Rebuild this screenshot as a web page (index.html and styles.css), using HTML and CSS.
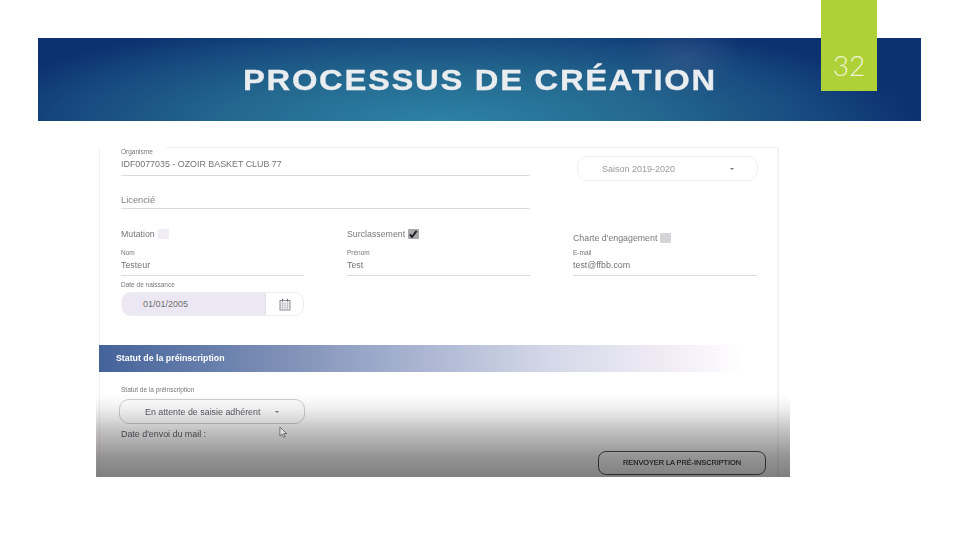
FILE: index.html
```html
<!DOCTYPE html>
<html lang="fr">
<head>
<meta charset="utf-8">
<title>Processus de création</title>
<link rel="stylesheet" href="styles.css">
</head>
<body>
<main class="slide">
  <header class="banner">
    <h1 class="title">PROCESSUS DE CRÉATION</h1>
  </header>
  <div class="badge">32</div>
  <section class="shot">
    <div class="frame">
      <div class="top-rule"></div>
      <div class="form">
        <div class="grid row-org">
          <div class="field span2">
            <div class="label">Organisme</div>
            <div class="value">IDF0077035 - OZOIR BASKET CLUB 77</div>
          </div>
          <div class="select season"><span>Saison 2019-2020</span><i class="caret"></i></div>
        </div>
        <div class="grid row-lic">
          <div class="field span2 lic"><div class="big">Licencié</div></div>
        </div>
        <div class="grid row-check">
          <div class="check">Mutation <i class="box"></i></div>
          <div class="check">Surclassement
            <i class="box on"><svg viewBox="0 0 10 10" width="10" height="10"><path d="M1.800 5.400 4 8 8.600 1.800" fill="none" stroke="#222" stroke-width="2"/></svg></i>
          </div>
          <div class="check charte">Charte d'engagement <i class="box grey"></i></div>
        </div>
        <div class="grid row-names">
          <div class="field"><div class="label">Nom</div><div class="value">Testeur</div></div>
          <div class="field"><div class="label">Prénom</div><div class="value">Test</div></div>
          <div class="field"><div class="label">E-mail</div><div class="value">test@ffbb.com</div></div>
        </div>
        <div class="label date-label">Date de naissance</div>
        <div class="date">
          <div class="date-value">01/01/2005</div>
          <div class="date-icon">
            <svg viewBox="0 0 12 13" width="12" height="13"><rect x="1" y="2.500" width="10" height="9.500" fill="none" stroke="#8d8d93" stroke-width="1"/><path d="M1 5h10M1 7.300h10M1 9.600h10M3.500 5v7M6 5v7M8.500 5v7" stroke="#a9a9af" stroke-width=".6"/><path d="M3.500 .8v3M8.500 .8v3" stroke="#77777d" stroke-width="1.200"/></svg>
          </div>
        </div>
      </div>
      <div class="band">Statut de la préinscription</div>
      <div class="lower">
        <div class="label status-label">Statut de la préinscription</div>
        <div class="select status"><span>En attente de saisie adhérent</span><i class="caret"></i></div>
        <div class="mail">Date d'envoi du mail :</div>
        <div class="actions"><div class="btn">RENVOYER LA PRÉ-INSCRIPTION</div></div>
      </div>
    </div>
    <div class="fade"></div>
    <svg class="cursor" viewBox="0 0 10 14" width="9" height="13"><path d="M1 1v10l2.500-2.200 1.700 3.700 1.700-.8-1.700-3.600H8.500z" fill="#e4e4e4" stroke="#555" stroke-width=".9"/></svg>
  </section>
</main>
</body>
</html>
```
FILE: styles.css
```css
* { box-sizing: border-box; }
html, body { margin: 0; padding: 0; background: #fff; }
body { width: 960px; height: 540px; overflow: hidden; font-family: "Liberation Sans", Arial, sans-serif; }
.slide { position: relative; width: 960px; height: 540px; padding-top: 38px; }
.banner {
  margin-left: 38px; width: 883px; height: 83px;
  padding: 25px 0 0 205px;
  background:
    radial-gradient(ellipse 55px 40px at 648px 20px, rgba(70,95,145,.4), rgba(70,95,145,0) 100%),
    radial-gradient(ellipse 470px 105px at 403px 83px, #2d82a6 0%, #24688f 45%, #174b7f 78%, #0d3270 100%);
}
.title {
  margin: 0; width: 418px; color: #e9edf0; font-size: 29px; line-height: 34px; font-weight: 700;
  letter-spacing: 1.500px; white-space: nowrap;
  transform: scaleX(1.13); transform-origin: 0 50%;
  -webkit-text-stroke: .3px #e9edf0; filter: blur(.3px);
}
.badge {
  position: absolute; left: 821px; top: 0; width: 56px; height: 91px;
  padding-top: 48px; text-align: center;
  background: #add136; color: #eef4d4; font-family: Lato, "Liberation Sans", sans-serif; font-weight: 300; font-size: 28px; line-height: 34px;
}
.shot { position: relative; margin: 18px 0 0 96px; width: 694px; height: 338px; overflow: hidden; background: #fff; }
.frame {
  height: 338px; margin-left: 3px; width: 680px;
  border-left: 1px solid #f5eef2; border-right: 2px solid #f6f3f5;
  filter: blur(.45px);
}
.top-rule { height: 1px; margin: 8px 0 0 66px; background: #f1f1f3; }
.form { padding: 0 0 0 21px; height: 197px; }
.grid { display: grid; grid-template-columns: 183px 183px 184px; column-gap: 43px; }
.span2 { grid-column: span 2; }
.label { font-size: 6.500px; line-height: 8px; color: #77777c; }
.value { font-size: 8.900px; line-height: 12px; color: #737378; margin-top: 2px; }
.field { border-bottom: 1px solid #dcdcdf; }
.row-org { height: 29px; }
.row-org .field { height: 28px; padding-top: 0; }
.select {
  display: flex; align-items: center; border: 1px solid #f0f0f2; border-radius: 10px; background: #fff;
  font-size: 9px; color: #9a9a9e;
}
.season { height: 25px; margin: 8px 0 0 4px; padding-left: 24px; justify-content: flex-start; width: 181px; }
.season span { width: 128px; }
.caret { display: block; width: 0; height: 0; border: 2px solid transparent; border-top: 2.500px solid #777; border-bottom: 0; }
.row-lic { height: 33px; }
.lic { height: 32px; padding-top: 17px; }
.big { font-size: 9.300px; line-height: 12px; color: #808085; }
.row-check { height: 39px; padding-top: 18px; }
.check { display: flex; align-items: center; gap: 3px; height: 12px; font-size: 8.800px; color: #77777c; white-space: nowrap; }
.charte { margin-top: 4px; }
.box { display: block; width: 11px; height: 10px; border-radius: 1px; background: #f1edf4; }
.box.on { background: #a9a9ad; }
.box.on svg { display: block; }
.box.grey { background: #d5d5d8; }
.row-names { height: 27px; }
.row-names .field { height: 27px; }
.date-label { margin-top: 5px; }
.date {
  display: flex; width: 183px; height: 24px; margin-top: 3px;
  border: 1px solid #f0eef3; border-radius: 9px; overflow: hidden;
}
.date-value { width: 143px; padding-left: 21px; background: #ece8f3; font-size: 9px; line-height: 22px; color: #6d6d72; }
.date-icon { flex: 1; display: flex; align-items: center; justify-content: center; border-left: 1px solid #e4e2e8; }
.band {
  height: 27px; padding-left: 17px; margin: 0 33px 0 -1px;
  background: linear-gradient(90deg, #44639b 0%, #7d8fb6 28%, #aab5d2 50%, #d4d8e8 70%, #f3eef7 90%, #fff 100%);
  color: #fff; font-size: 8.800px; line-height: 27px; font-weight: 700;
}
.lower { padding: 14px 0 0 19px; height: 104px; }
.status-label { padding-left: 2px; }
.status { width: 186px; height: 25px; margin-top: 5px; padding-left: 25px; border-color: #cfcfd2; color: #606064; font-size: 8.900px; gap: 15px; }
.status span { white-space: nowrap; }
.mail { margin-top: 4px; padding-left: 2px; font-size: 8.900px; line-height: 12px; color: #616165; }
.actions { display: flex; justify-content: flex-end; padding-right: 11px; margin-top: 11px; }
.btn {
  width: 168px; height: 24px; border: 1px solid #555558; border-radius: 8px;
  text-align: center; font-size: 7.300px; line-height: 22px; color: #2a2a2c; -webkit-text-stroke: .15px #2a2a2c;
}
.fade {
  position: absolute; left: 0; right: 0; bottom: 0; height: 82px;
  background: linear-gradient(180deg, rgba(0,0,0,0) 0%, rgba(0,0,0,.07) 18%, rgba(0,0,0,.25) 45%, rgba(0,0,0,.42) 75%, rgba(0,0,0,.5) 100%);
  pointer-events: none;
}
.cursor { position: absolute; left: 183px; top: 287px; }
```
